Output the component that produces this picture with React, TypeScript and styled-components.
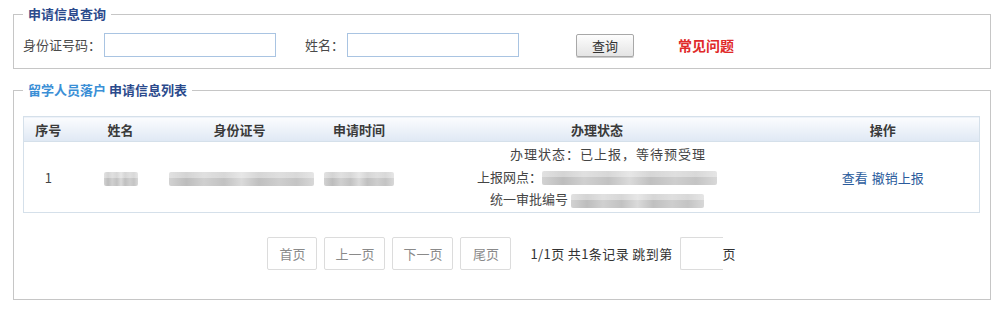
import React from "react";
import styled, { createGlobalStyle } from "styled-components";

const Global = createGlobalStyle`
  html, body { margin: 0; padding: 0; background: #fff; }
  body { font-family: "Noto Sans CJK SC", "Noto Sans", sans-serif; font-size: 13px; color: #333; }
  * { box-sizing: border-box; }
`;

const Page = styled.div`
  padding: 0 9px 0 13px;
  width: 1000px;
`;

const Fieldset = styled.fieldset<{ $mt?: number }>`
  margin: ${(p) => p.$mt ?? 7}px 0 0 0;
  border: 1px solid #c6c6c6;
  padding: ${(p) => (p.$mt ? "19px 10px 29px 9px" : "12px 10px 11px 9px")};
  min-width: 0;
`;

const Legend = styled.legend`
  padding: 0 5px;
  font-size: 13px;
  line-height: 14px;
  font-weight: bold;
  color: #2b4a8c;
`;

const Light = styled.span`
  color: #3b8fd6;
`;

const SearchRow = styled.div`
  display: flex;
  align-items: center;
  height: 24px;
`;

const Label = styled.span`
  color: #4a4a4a;
  line-height: 24px;
  margin-right: 3px;
`;

const TextInput = styled.input`
  width: 172px;
  height: 24px;
  border: 1px solid #a9c4e2;
  margin: 0 29px 0 0;
  padding: 0 4px;
  outline: none;
`;

const QueryButton = styled.button`
  margin-left: 28px;
  width: 58px;
  height: 23px;
  border: 1px solid #a8a8a8;
  border-radius: 2px;
  background: linear-gradient(#fdfdfd, #e4e4e4);
  font-family: inherit;
  font-size: 13px;
  color: #333;
  padding: 0;
  box-shadow: 0 1px 0 #ccc;
`;

const FaqLink = styled.a`
  margin-left: 44px;
  color: #e02a2a;
  font-weight: bold;
  font-size: 14px;
  text-decoration: none;
`;

const Table = styled.table`
  width: 956px;
  border-collapse: collapse;
  border: 1px solid #d5e0ea;
  table-layout: fixed;
`;

const Th = styled.th<{ $w: number }>`
  width: ${(p) => p.$w}px;
  height: 25px;
  padding: 0;
  font-weight: bold;
  font-size: 13px;
  color: #3a3a3a;
  background: linear-gradient(#fbfcfe, #dfe8f4);
  border-bottom: 1px solid #d5e0ea;
  text-align: center;
`;

const Td = styled.td`
  height: 71px;
  padding: 0;
  text-align: center;
  color: #444;
  vertical-align: middle;
`;

const Blur = styled.span<{ $w: number }>`
  display: inline-block;
  width: ${(p) => p.$w}px;
  height: 14px;
  vertical-align: middle;
  border-radius: 2px;
  background:
    linear-gradient(rgba(255,255,255,0.35) 0 45%, rgba(255,255,255,0) 45% 100%),
    linear-gradient(
      90deg,
      #d2d2d2 0%, #bdbdbd 12%, #d0d0d0 24%, #c2c2c2 38%, #dadada 50%,
      #c0c0c0 62%, #cecece 76%, #c4c4c4 88%, #d8d8d8 100%
    );
`;

const StatusLine = styled.div<{ $first?: boolean }>`
  line-height: 22.5px;
  white-space: nowrap;
  letter-spacing: ${(p) => (p.$first ? "1px" : "0")};
  padding-left: ${(p) => (p.$first ? "22px" : "0")};
`;

const LinkA = styled.a`
  color: #2a5b9c;
  text-decoration: none;
  margin: 0 2px;
`;

const Pager = styled.div`
  margin-top: 24px;
  display: flex;
  justify-content: center;
  align-items: center;
  gap: 7px;
`;

const PageBtn = styled.span<{ $w: number }>`
  display: inline-flex;
  justify-content: center;
  align-items: center;
  width: ${(p) => p.$w}px;
  height: 33px;
  border: 1px solid #dcdcdc;
  border-radius: 2px;
  color: #8a8a8a;
  font-size: 13px;
`;

const PageInfo = styled.span`
  margin-left: 12px;
  color: #333;
  font-size: 13px;
  letter-spacing: 0.4px;
`;

const JumpInput = styled.input`
  width: 43px;
  height: 33px;
  border: 1px solid #dcdcdc;
  border-right: none;
  border-radius: 2px 0 0 2px;
  outline: none;
`;

const PageUnit = styled.span`
  margin-left: -7px;
  color: #333;
`;

export default function App() {
  return (
    <Page>
      <Global />
      <Fieldset>
        <Legend>申请信息查询</Legend>
        <SearchRow>
          <Label>身份证号码：</Label>
          <TextInput />
          <Label>姓名：</Label>
          <TextInput />
          <QueryButton>查询</QueryButton>
          <FaqLink>常见问题</FaqLink>
        </SearchRow>
      </Fieldset>
      <Fieldset $mt={14}>
        <Legend>
          <Light>留学人员落户</Light> 申请信息列表
        </Legend>
        <Table>
          <thead>
            <tr>
              <Th $w={49}>序号</Th>
              <Th $w={96}>姓名</Th>
              <Th $w={142}>身份证号</Th>
              <Th $w={97}>申请时间</Th>
              <Th $w={379}>办理状态</Th>
              <Th $w={193}>操作</Th>
            </tr>
          </thead>
          <tbody>
            <tr>
              <Td>1</Td>
              <Td><Blur $w={34} /></Td>
              <Td><Blur $w={145} /></Td>
              <Td><Blur $w={70} /></Td>
              <Td>
                <StatusLine $first>办理状态：已上报，等待预受理</StatusLine>
                <StatusLine>上报网点：<Blur $w={175} /></StatusLine>
                <StatusLine>统一审批编号 <Blur $w={133} /></StatusLine>
              </Td>
              <Td>
                <LinkA>查看</LinkA>
                <LinkA>撤销上报</LinkA>
              </Td>
            </tr>
          </tbody>
        </Table>
        <Pager>
          <PageBtn $w={50}>首页</PageBtn>
          <PageBtn $w={61}>上一页</PageBtn>
          <PageBtn $w={61}>下一页</PageBtn>
          <PageBtn $w={51}>尾页</PageBtn>
          <PageInfo>1/1页 共1条记录 跳到第</PageInfo>
          <JumpInput />
          <PageUnit>页</PageUnit>
        </Pager>
      </Fieldset>
    </Page>
  );
}
